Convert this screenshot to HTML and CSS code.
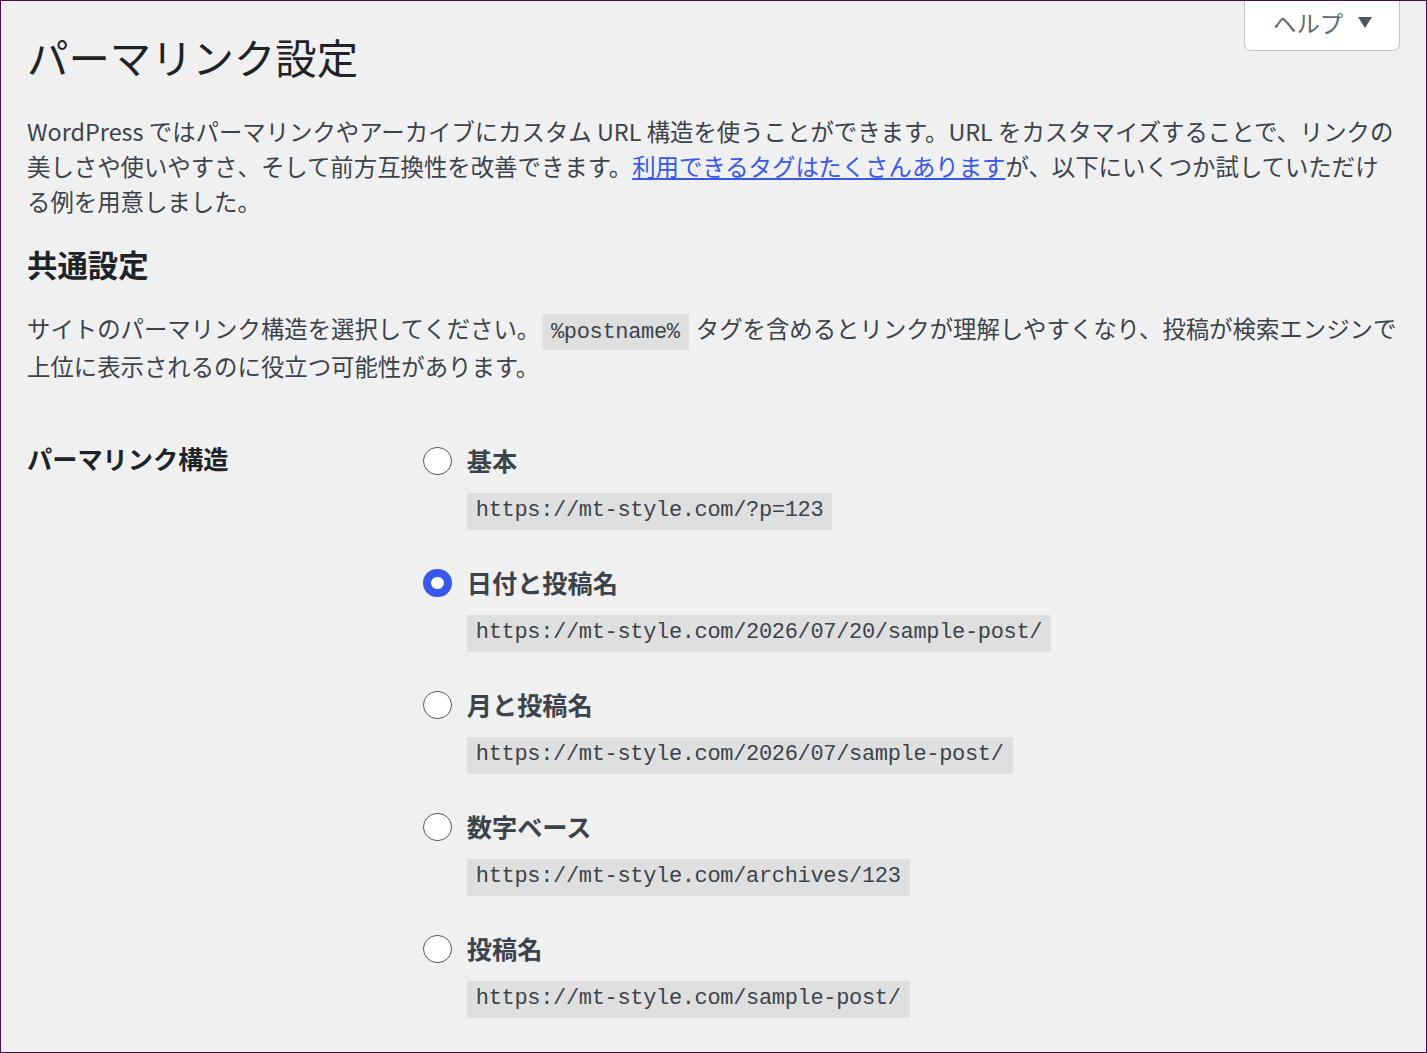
FILE: index.html
```html
<!DOCTYPE html>
<html lang="ja">
<head>
    <meta charset="UTF-8">
    <meta name="viewport" content="width=device-width, initial-scale=1.0">
    <title>パーマリンク設定</title>
    <link rel="stylesheet" href="styles.css">
</head>
<body>
    <div class="wrap">
        <div class="help-tab">
            <button class="help-button">ヘルプ
                <svg class="caret" width="14" height="11" viewBox="0 0 14 11"><polygon points="0,0 14,0 7,11" /></svg>
            </button>
        </div>

        <h1>パーマリンク設定</h1>

        <p>WordPress ではパーマリンクやアーカイブにカスタム URL 構造を使うことができます。URL をカスタマイズすることで、リンクの美しさや使いやすさ、そして前方互換性を改善できます。<a href="#">利用できるタグはたくさんあります</a>が、以下にいくつか試していただける例を用意しました。</p>

        <h2>共通設定</h2>

        <p>サイトのパーマリンク構造を選択してください。<code>%postname%</code> タグを含めるとリンクが理解しやすくなり、投稿が検索エンジンで上位に表示されるのに役立つ可能性があります。</p>

        <div class="form-row">
            <div class="form-label">パーマリンク構造</div>
            <div class="form-field">
                <div class="choice">
                    <span class="radio"></span>
                    <div class="choice-text">
                        <label>基本</label>
                        <code class="sample">https://mt-style.com/?p=123</code>
                    </div>
                </div>
                <div class="choice">
                    <span class="radio checked"></span>
                    <div class="choice-text">
                        <label>日付と投稿名</label>
                        <code class="sample">https://mt-style.com/2026/07/20/sample-post/</code>
                    </div>
                </div>
                <div class="choice">
                    <span class="radio"></span>
                    <div class="choice-text">
                        <label>月と投稿名</label>
                        <code class="sample">https://mt-style.com/2026/07/sample-post/</code>
                    </div>
                </div>
                <div class="choice">
                    <span class="radio"></span>
                    <div class="choice-text">
                        <label>数字ベース</label>
                        <code class="sample">https://mt-style.com/archives/123</code>
                    </div>
                </div>
                <div class="choice">
                    <span class="radio"></span>
                    <div class="choice-text">
                        <label>投稿名</label>
                        <code class="sample">https://mt-style.com/sample-post/</code>
                    </div>
                </div>
            </div>
        </div>
    </div>
</body>
</html>
```
FILE: styles.css
```css
html, body {
    height: 100%;
}
body {
    margin: 0;
    box-sizing: border-box;
    border: 1px solid #4a0a4c;
    background-color: #f0f0f1;
    color: #3c434a;
    font-family: "Noto Sans CJK JP", "Noto Sans", sans-serif;
    font-size: 23.4px;
    line-height: 1.5;
    overflow: hidden;
}
.wrap {
    padding: 0 26px 0 26px;
}
.help-tab {
    float: right;
    margin-right: 0;
}
.help-button {
    display: flex;
    align-items: center;
    gap: 15px;
    width: 156px;
    height: 50px;
    padding: 0 0 6px 28px;
    box-sizing: border-box;
    background-color: #fff;
    border: 1px solid #c3c4c7;
    border-top: none;
    border-radius: 0 0 7px 7px;
    color: #646970;
    font-family: inherit;
    font-size: 23.4px;
    cursor: pointer;
}
.caret {
    fill: #50575e;
}
h1 {
    margin: 0;
    padding: 29px 0 7px;
    font-size: 41.4px;
    font-weight: 400;
    line-height: 1.3;
    color: #1d2327;
}
p {
    margin: 23.4px 0;
}
a {
    color: #3858e9;
}
h2 {
    margin: 28px 0 30.4px;
    font-size: 30.4px;
    font-weight: 700;
    line-height: 32.8px;
    color: #1d2327;
}
code {
    font-family: "Liberation Mono", "DejaVu Sans Mono", monospace;
    font-size: 22px;
    letter-spacing: -0.33px;
    background-color: rgba(0, 0, 0, 0.07);
    padding: 6px 9px 5px;
    margin: 0 1.8px;
}
.form-row {
    display: flex;
    margin-top: 25px;
}
.form-label {
    width: 360px;
    padding: 33.6px 18px 0 0;
    font-size: 25.2px;
    font-weight: 700;
    line-height: 32.8px;
    color: #1d2327;
}
.form-field {
    padding: 35.6px 0 0 18px;
}
.choice {
    display: flex;
    align-items: flex-start;
    gap: 15px;
    margin-bottom: 36.5px;
}
.radio {
    width: 28.8px;
    height: 28.8px;
    margin-top: 2.1px;
    box-sizing: border-box;
    border: 1.5px solid #50575e;
    border-radius: 50%;
    background-color: #fff;
    flex-shrink: 0;
}
.radio.checked {
    border: 8px solid #3858e9;
}
.choice-text {
    display: flex;
    flex-direction: column;
    align-items: flex-start;
}
.choice-text label {
    font-size: 25.2px;
    font-weight: 700;
    line-height: 33px;
    color: #3c434a;
}
.sample {
    margin: 16px 0 0 0;
    padding: 0 9px;
    line-height: 36.5px;
    color: #3c434a;
}
```
